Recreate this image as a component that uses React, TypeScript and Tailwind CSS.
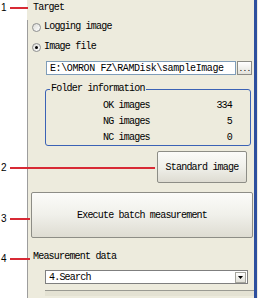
import React from "react";

const ui = "font-['Liberation_Mono',monospace] text-[10px] tracking-[-0.8px] text-black";

export default function App() {
  return (
    <div className="relative flex h-[298px] w-[258px] overflow-hidden bg-white">
      <div className="w-[27px] shrink-0" />
      <Panel />
      <div className="w-[3px] shrink-0 bg-[#2d4f9e]" />
      <div className="w-[1px] shrink-0 bg-[#ecebe4]" />
      <Callout n="1" y={8} to={29} />
      <Callout n="2" y={168} to={156} />
      <Callout n="3" y={219} to={31} />
      <Callout n="4" y={259} to={31} />
    </div>
  );
}

function Callout({ n, y, to }: { n: string; y: number; to: number }) {
  return (
    <div className="pointer-events-none absolute left-0 flex items-center" style={{ top: y - 6 }}>
      <span className="w-[10px] pl-[1px] font-['Liberation_Sans',sans-serif] text-[10px] leading-[12px] text-black">{n}</span>
      <span className="h-[1.5px] bg-[#d82a35]" style={{ width: to - 11 }} />
    </div>
  );
}

function Panel() {
  return (
    <div className={`flex w-[227px] shrink-0 flex-col bg-[#edebdd] ${ui}`}>
      <div className="h-[20px] pl-[6px] leading-[16px]">Target</div>
      <div className="flex flex-1 flex-col border-l border-[#9d9d9d]">
        <Radio label="Logging image" />
        <Radio label="Image file" checked className="mt-[6px]" />

        <div className="ml-[18px] mt-[7px] flex h-[14px]">
          <div className="flex w-[190px] items-center border border-[#7f9db9] bg-white pl-[3px] tracking-[-0.4px]">
            E:\OMRON FZ\RAMDisk\sampleImage
          </div>
          <button className="ml-[1px] flex w-[15px] items-end justify-center border border-[#8b8b84] bg-gradient-to-b from-white to-[#e3e2da] pb-[2px] text-[8px] leading-[6px]">
            ...
          </button>
        </div>

        <fieldset className="ml-[17px] mr-[3px] mt-[9px] h-[62px] rounded-[3px] border border-[#3b62b5] px-0 pb-0 pt-0">
          <legend className="ml-[4px] px-[1px] leading-[10px]">Folder information</legend>
          <div className="mt-[6px] grid grid-cols-[1fr_auto] gap-y-[4px] pl-[57px] pr-[18px] leading-[12px]">
            <span>OK images</span>
            <span className="text-right">334</span>
            <span>NG images</span>
            <span className="text-right">5</span>
            <span>NC images</span>
            <span className="text-right">0</span>
          </div>
        </fieldset>

        <div className="mt-[5px] flex justify-end pr-[7px]">
          <XpButton className="h-[32px] w-[90px]">Standard image</XpButton>
        </div>

        <div className="mt-[9px] flex pl-[3px] pr-[1px]">
          <XpButton className="h-[46px] w-full">Execute batch measurement</XpButton>
        </div>

        <div className="mt-[12px] h-[14px] pl-[5px] leading-[14px]">Measurement data</div>

        <div className="ml-[17px] mt-[6px] flex h-[14px] w-[203px] items-center border border-[#7f7f7f] bg-white">
          <span className="flex-1 pl-[3px]">4.Search</span>
          <span className="mr-[1px] flex h-[11px] w-[11px] items-center justify-center border border-[#a5a59d] bg-gradient-to-b from-white to-[#e1e0d8]">
            <svg width="5" height="3" viewBox="0 0 5 3">
              <path d="M0 0h5L2.5 3z" fill="#000" />
            </svg>
          </span>
        </div>

        <div className="ml-[17px] mt-[6px] h-[6px] border-t border-[#9a9a92] bg-[#e4e2d3]" />
      </div>
    </div>
  );
}

function Radio({ label, checked, className }: { label: string; checked?: boolean; className?: string }) {
  return (
    <div className={`flex h-[14px] items-center pl-[4px] ${className ?? ""}`}>
      <span className="flex h-[9px] w-[9px] items-center justify-center rounded-full border border-[#8e8f8f] bg-gradient-to-br from-[#dcdcd7] to-white">
        {checked && <span className="h-[3px] w-[3px] rounded-full bg-black" />}
      </span>
      <span className="ml-[3px] leading-[14px]">{label}</span>
    </div>
  );
}

function XpButton({ children, className }: { children: React.ReactNode; className?: string }) {
  return (
    <button
      className={`flex items-center justify-center rounded-[2px] border border-[#8d8d86] bg-gradient-to-b from-[#fbfbf9] via-[#f0f0ea] to-[#dedcd2] ${className ?? ""}`}
    >
      {children}
    </button>
  );
}
